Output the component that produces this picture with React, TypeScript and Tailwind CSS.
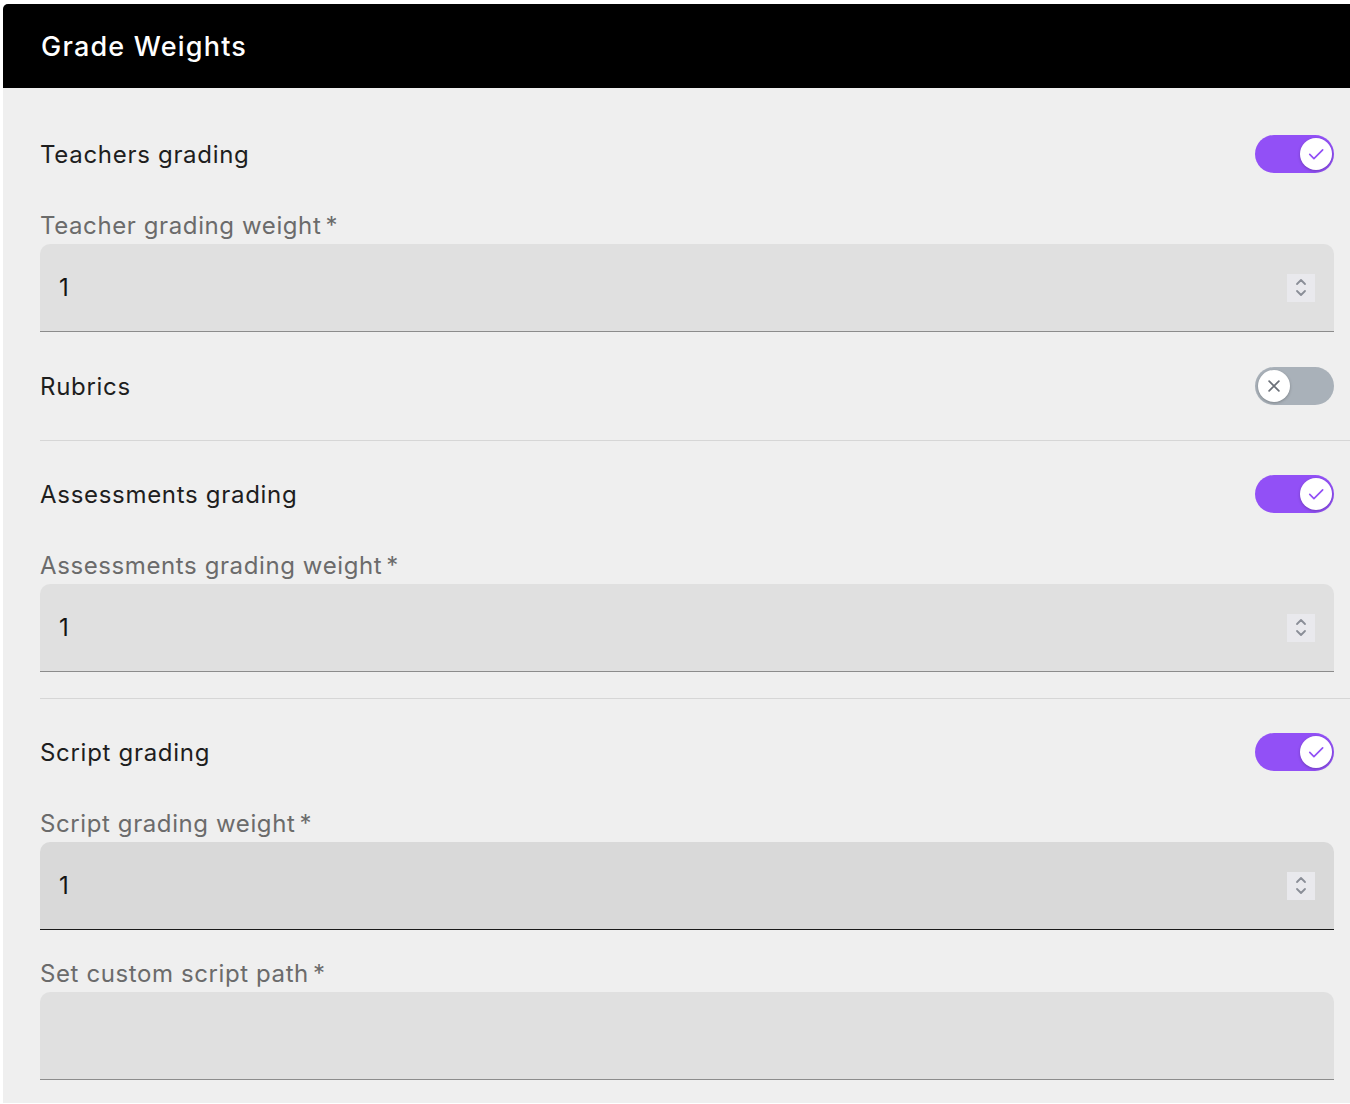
import React from "react";

function Toggle({ on }: { on: boolean }) {
  return (
    <div
      className={
        "relative h-[38px] w-[79px] shrink-0 rounded-full " +
        (on ? "bg-[#9250f6]" : "bg-[#a9b1b9]")
      }
    >
      <div
        className={
          "absolute top-[3px] flex h-[32px] w-[32px] items-center justify-center rounded-full bg-white shadow-[0_1px_3px_rgba(0,0,0,0.25)] " +
          (on ? "right-[2px]" : "left-[3px]")
        }
      >
        {on ? (
          <svg width="20" height="20" viewBox="0 0 24 24" fill="none" stroke="#9250f6" strokeWidth="2" strokeLinecap="round" strokeLinejoin="round">
            <path d="M4.5 12.5l5 5L20 7" />
          </svg>
        ) : (
          <svg width="18" height="18" viewBox="0 0 24 24" fill="none" stroke="#6b7078" strokeWidth="2.3" strokeLinecap="round">
            <path d="M5.5 5.5l13 13M18.5 5.5l-13 13" />
          </svg>
        )}
      </div>
    </div>
  );
}

function Row({ label, on }: { label: string; on: boolean }) {
  return (
    <div className="flex h-[56px] items-center justify-between pr-[37px]">
      <span className="pt-px text-[24px] tracking-[0.7px] text-[#1e1e1e]">{label}</span>
      <Toggle on={on} />
    </div>
  );
}

function Spinner() {
  return (
    <div className="flex h-[28px] w-[28px] flex-col items-center justify-center gap-[3px] bg-[#e9e9ed]">
      <svg width="12" height="8" viewBox="0 0 12 8" fill="none" stroke="#8a8e97" strokeWidth="1.8" strokeLinecap="round" strokeLinejoin="round">
        <path d="M2 6l4-4 4 4" />
      </svg>
      <svg width="12" height="8" viewBox="0 0 12 8" fill="none" stroke="#8a8e97" strokeWidth="1.8" strokeLinecap="round" strokeLinejoin="round">
        <path d="M2 2l4 4 4-4" />
      </svg>
    </div>
  );
}

function Field({
  label,
  value,
  number,
  active,
}: {
  label: string;
  value?: string;
  number?: boolean;
  active?: boolean;
}) {
  return (
    <div className="flex flex-col pr-[37px]">
      <div className="h-[36px] text-[24px] leading-[36px] tracking-[0.6px] text-[#6b6b6b]">
        {label}
        <span className="ml-[4px]">*</span>
      </div>
      <div
        className={
          "flex h-[88px] items-center justify-between rounded-t-[10px] border-b pl-[19px] pr-[19px] " +
          (active ? "border-[#1a1a1a] bg-[#d9d9d9]" : "border-[#8c8c8c] bg-[#e0e0e0]")
        }
      >
        <span className="text-[24px] text-[#141414]">{value}</span>
        {number && <Spinner />}
      </div>
    </div>
  );
}

function Divider() {
  return <div className="-mb-px h-px bg-[#d6d6d6]" />;
}

export default function App() {
  return (
    <div
      className="w-full overflow-hidden bg-white pl-[3px] pt-[4px]"
      style={{ fontFamily: "Inter, 'Noto Sans', sans-serif" }}
    >
      <div className="w-[1368px] overflow-hidden rounded-tl-[5px] bg-[#efefef]">
        <div className="flex h-[84px] items-center bg-black pl-[38px] pt-[2px]">
          <h1 className="text-[27px] font-medium tracking-[1.2px] text-white">Grade Weights</h1>
        </div>
        <div className="flex flex-col gap-[26px] pb-[23px] pl-[37px] pt-[38px]">
          <Row label="Teachers grading" on={true} />
          <Field label="Teacher grading weight" value="1" number />
          <Row label="Rubrics" on={false} />
          <Divider />
          <Row label="Assessments grading" on={true} />
          <Field label="Assessments grading weight" value="1" number />
          <Divider />
          <Row label="Script grading" on={true} />
          <Field label="Script grading weight" value="1" number active />
          <Field label="Set custom script path" value="" />
        </div>
      </div>
    </div>
  );
}
